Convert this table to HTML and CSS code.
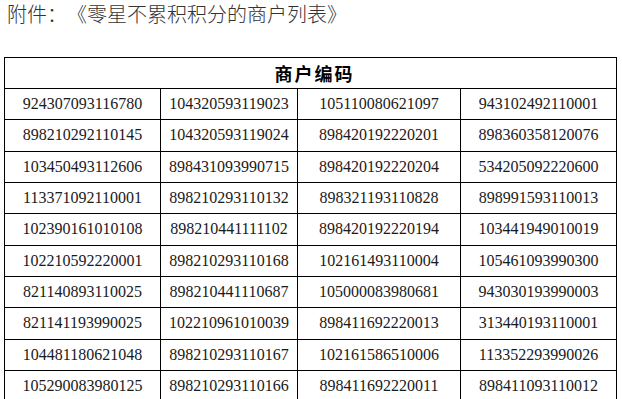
FILE: index.html
```html
<!DOCTYPE html>
<html lang="zh">
<head>
<meta charset="utf-8">
<title>附件</title>
<link rel="stylesheet" href="styles.css">
</head>
<body>
<div class="title">附件：《零星不累积积分的商户列表》</div>
<table class="list">
<colgroup><col class="c1"><col class="c2"><col class="c3"><col class="c4"></colgroup>
<thead><tr class="head"><th colspan="4">商户编码</th></tr></thead>
<tbody>
<tr><td>924307093116780</td><td>104320593119023</td><td>105110080621097</td><td>943102492110001</td></tr>
<tr><td>898210292110145</td><td>104320593119024</td><td>898420192220201</td><td>898360358120076</td></tr>
<tr><td>103450493112606</td><td>898431093990715</td><td>898420192220204</td><td>534205092220600</td></tr>
<tr><td>113371092110001</td><td>898210293110132</td><td>898321193110828</td><td>898991593110013</td></tr>
<tr><td>102390161010108</td><td>898210441111102</td><td>898420192220194</td><td>103441949010019</td></tr>
<tr><td>102210592220001</td><td>898210293110168</td><td>102161493110004</td><td>105461093990300</td></tr>
<tr><td>821140893110025</td><td>898210441110687</td><td>105000083980681</td><td>943030193990003</td></tr>
<tr><td>821141193990025</td><td>102210961010039</td><td>898411692220013</td><td>313440193110001</td></tr>
<tr><td>104481180621048</td><td>898210293110167</td><td>102161586510006</td><td>113352293990026</td></tr>
<tr><td>105290083980125</td><td>898210293110166</td><td>898411692220011</td><td>898411093110012</td></tr>
</tbody>
</table>
</body>
</html>
```
FILE: styles.css
```css
html, body {
  margin: 0;
  padding: 0;
  background: #ffffff;
}
body {
  font-family: "Liberation Serif", "Noto Sans CJK SC", serif;
  color: #1a1a1a;
  overflow: hidden;
}
.title {
  font-family: "Noto Sans CJK SC", sans-serif;
  font-size: 20px;
  font-weight: 300;
  line-height: 28px;
  color: #333333;
  padding-left: 7px;
  margin-bottom: 29px;
  white-space: nowrap;
  text-spacing-trim: space-all;
  font-feature-settings: "halt" 0, "chws" 0;
}
.list {
  margin-left: 4px;
  border-collapse: collapse;
  table-layout: fixed;
  width: 613px;
}
.c1 { width: 156px; }
.c2 { width: 137px; }
.c3 { width: 163px; }
.c4 { width: 156px; }
.list th, .list td {
  border: 1px solid #000000;
  padding: 0;
  text-align: center;
  vertical-align: middle;
}
.head {
  height: 31px;
}
.head th {
  font-family: "Noto Sans CJK SC", sans-serif;
  font-weight: 700;
  font-size: 18px;
  letter-spacing: 2px;
  padding-left: 8px;
  color: #000000;
  line-height: 20px;
}
.list tbody tr {
  height: 31.33px;
}
.list td {
  font-size: 16px;
  line-height: 18px;
}
```
